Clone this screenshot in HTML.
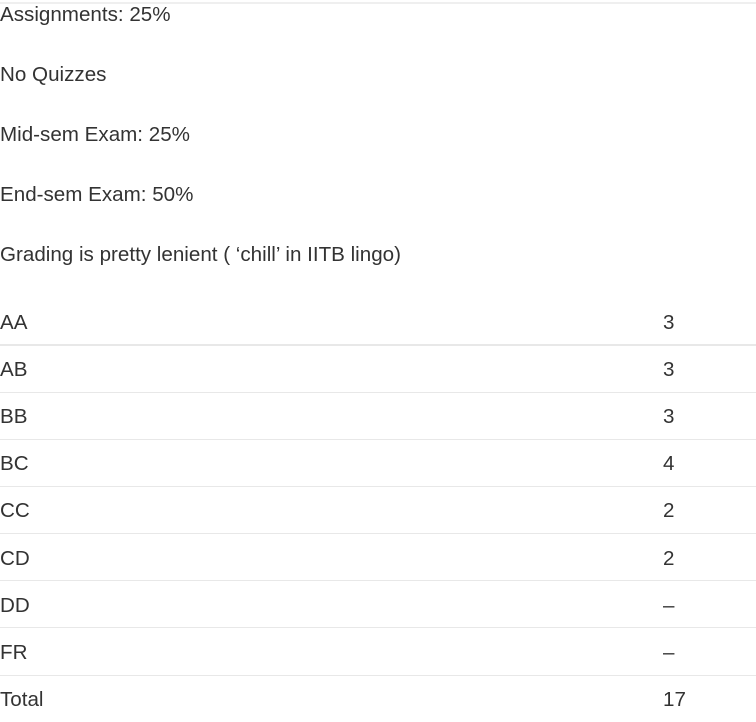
<!DOCTYPE html>
<html><head><style>
body{margin:0;width:756px;height:722px;overflow:hidden;background:#fff;font-family:"Liberation Sans",sans-serif;color:#333;font-size:20.6px;position:relative}
.t{position:absolute;left:0;line-height:24px;white-space:nowrap}
.hl{position:absolute;left:0;width:756px;height:1px;background:#e8e8e8}
.n{position:absolute;left:663px;line-height:24px}
</style></head><body>
<div class="hl" style="top:2px;height:2px;background:#efefef"></div>
<div class="t" style="top:3px">Assignments: 25%</div>
<div class="t" style="top:63px">No Quizzes</div>
<div class="t" style="top:123px">Mid-sem Exam: 25%</div>
<div class="t" style="top:183px">End-sem Exam: 50%</div>
<div class="t" style="top:243px">Grading is pretty lenient ( ‘chill’ in IITB lingo)</div>

<div class="t" style="top:311px">AA</div><div class="n" style="top:311px">3</div>
<div class="hl" style="top:344px;height:2px"></div>
<div class="t" style="top:358px">AB</div><div class="n" style="top:358px">3</div>
<div class="hl" style="top:392px"></div>
<div class="t" style="top:405px">BB</div><div class="n" style="top:405px">3</div>
<div class="hl" style="top:439px"></div>
<div class="t" style="top:452px">BC</div><div class="n" style="top:452px">4</div>
<div class="hl" style="top:486px"></div>
<div class="t" style="top:499px">CC</div><div class="n" style="top:499px">2</div>
<div class="hl" style="top:533px"></div>
<div class="t" style="top:547px">CD</div><div class="n" style="top:547px">2</div>
<div class="hl" style="top:580px"></div>
<div class="t" style="top:594px">DD</div><div class="n" style="top:594px">–</div>
<div class="hl" style="top:627px"></div>
<div class="t" style="top:641px">FR</div><div class="n" style="top:641px">–</div>
<div class="hl" style="top:675px"></div>
<div class="t" style="top:688px">Total</div><div class="n" style="top:688px">17</div>
</body></html>
